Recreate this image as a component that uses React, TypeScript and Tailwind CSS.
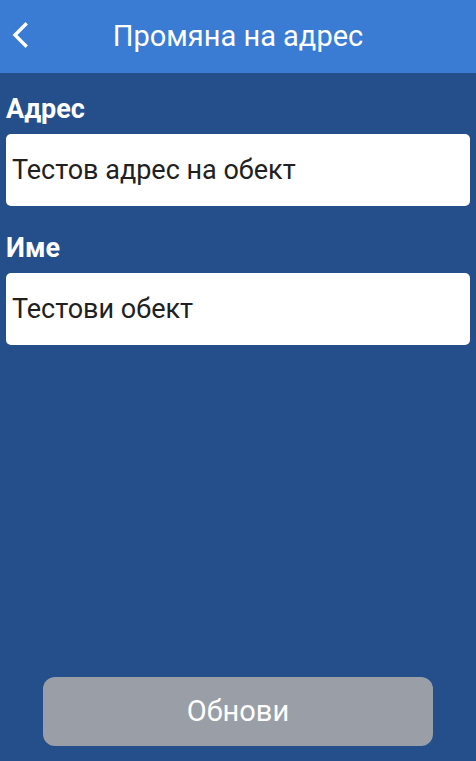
import React from "react"

const font = { fontFamily: "Roboto, 'Noto Sans', sans-serif" }

function Field({ label, value, first }: { label: string; value: string; first?: boolean }) {
  return (
    <div className={first ? "mt-[21px]" : "mt-[27px]"}>
      <div className="text-[27px] leading-[30px] font-bold text-white">{label}</div>
      <div className="mt-[10px] h-[72px] rounded-[5px] bg-white flex items-center px-[6px]">
        <span className="text-[27px] text-[#212121]">{value}</span>
      </div>
    </div>
  )
}

export default function App() {
  return (
    <div className="w-[476px] h-[761px] flex flex-col bg-[#254f8a]" style={font}>
      <header className="relative h-[73px] shrink-0 bg-[#3a7bd4] flex items-center justify-center">
        <button type="button" className="absolute left-[10px] top-[21px] w-[20px] h-[28px] flex items-center justify-center">
          <svg width="20" height="28" viewBox="0 0 20 28" fill="none">
            <polyline
              points="15.5,3.5 5,14 15.5,24.5"
              stroke="white"
              strokeWidth="3.4"
              strokeLinecap="square"
              strokeLinejoin="miter"
            />
          </svg>
        </button>
        <h1 className="text-[29px] text-white font-normal">Промяна на адрес</h1>
      </header>

      <main className="px-[6px]">
        <Field first label="Адрес" value="Тестов адрес на обект" />
        <Field label="Име" value="Тестови обект" />
      </main>

      <div className="flex-1" />

      <div className="flex justify-center pb-[15px]">
        <button
          type="button"
          className="w-[390px] h-[69px] rounded-[12px] bg-[#9a9ea6] text-white text-[29px]"
        >
          Обнови
        </button>
      </div>
    </div>
  )
}
